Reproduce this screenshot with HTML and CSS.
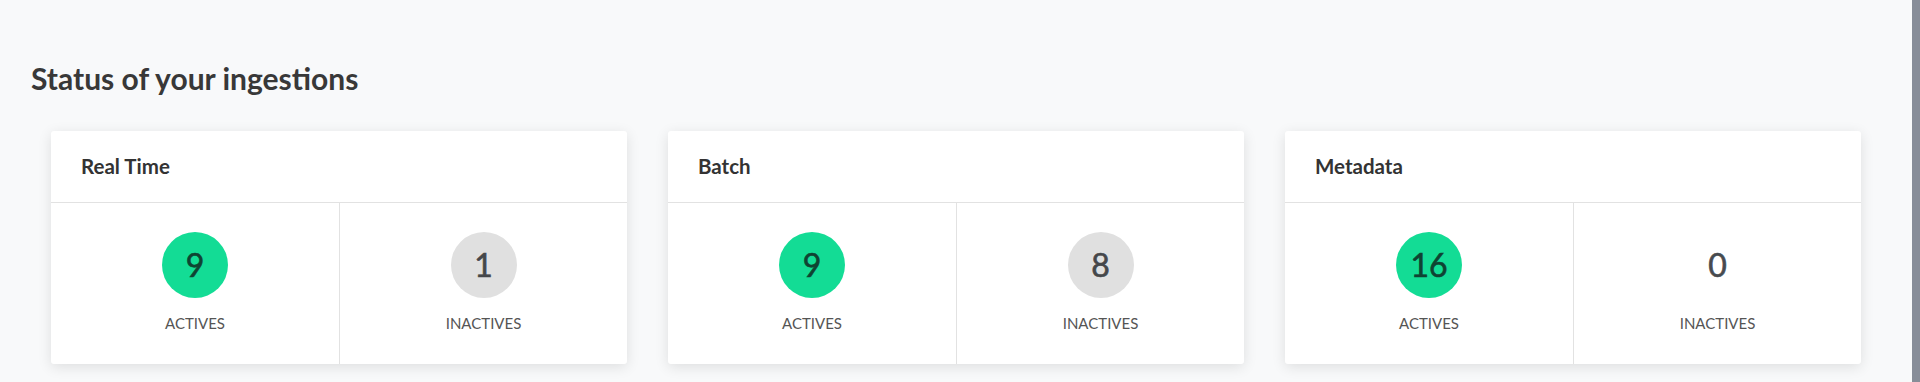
FILE: index.html
```html
<!DOCTYPE html>
<html lang="en">
  <head>
    <meta charset="UTF-8" />
    <meta name="viewport" content="width=device-width, initial-scale=1.0" />
    <title>Ingestions status</title>
    <link rel="stylesheet" href="styles.css">
  </head>

  <body>
    <div class="page">
      <main class="content">
        <h1 class="title">Status of your ingestions</h1>
        <div class="cards">
          <section class="card">
            <div class="card-header">Real Time</div>
            <div class="card-body">
              <div class="stat">
                <div class="count active">9</div>
                <div class="label">Actives</div>
              </div>
              <div class="stat">
                <div class="count inactive">1</div>
                <div class="label">Inactives</div>
              </div>
            </div>
          </section>
          <section class="card">
            <div class="card-header">Batch</div>
            <div class="card-body">
              <div class="stat">
                <div class="count active">9</div>
                <div class="label">Actives</div>
              </div>
              <div class="stat">
                <div class="count inactive">8</div>
                <div class="label">Inactives</div>
              </div>
            </div>
          </section>
          <section class="card">
            <div class="card-header">Metadata</div>
            <div class="card-body">
              <div class="stat">
                <div class="count active">16</div>
                <div class="label">Actives</div>
              </div>
              <div class="stat">
                <div class="count">0</div>
                <div class="label">Inactives</div>
              </div>
            </div>
          </section>
        </div>
      </main>
      <div class="scrollbar"></div>
    </div>
  </body>
</html>
```

FILE: styles.css
```css
html,
body {
  margin: 0;
  height: 100%;
}
body {
  background-color: #f8f9fa;
  font-family: Lato, "Open Sans", sans-serif;
  color: #333;
}

.page {
  display: flex;
  height: 100%;
}
.content {
  flex: 1;
  padding: 0 51px 0 31px;
}
.scrollbar {
  width: 8px;
  background-color: #878d98;
}

.title {
  margin: 60px 0 35px;
  font-size: 30px;
  font-weight: 700;
  line-height: 1.2;
  color: #383838;
}

.cards {
  display: grid;
  grid-template-columns: repeat(3, 1fr);
  gap: 41px;
  margin-left: 20px;
}
.card {
  background-color: white;
  border-radius: 3px;
  box-shadow: 0 3px 14px rgba(0, 0, 0, 0.11);
}
.card-header {
  padding: 23px 30px 23px;
  font-size: 20.5px;
  font-weight: 700;
  line-height: 1.2;
  color: #333;
  border-bottom: 1px solid #e2e2e2;
}
.card-body {
  display: grid;
  grid-template-columns: 1fr 1fr;
}
.stat {
  display: flex;
  flex-direction: column;
  align-items: center;
  padding: 29px 0 32px;
}
.stat + .stat {
  border-left: 1px solid #e2e2e2;
}
.count {
  width: 66px;
  height: 66px;
  border-radius: 50%;
  display: flex;
  justify-content: center;
  align-items: center;
  font-size: 32px;
  -webkit-text-stroke: 0.6px currentColor;
  color: #474a4f;
}
.count.active {
  background-color: #13dc95;
  color: #0f4332;
}
.count.inactive {
  background-color: #e0e0e0;
  color: #45474a;
}
.label {
  margin-top: 16px;
  font-size: 15px;
  line-height: 1.2;
  text-transform: uppercase;
  color: #555;
}
```
